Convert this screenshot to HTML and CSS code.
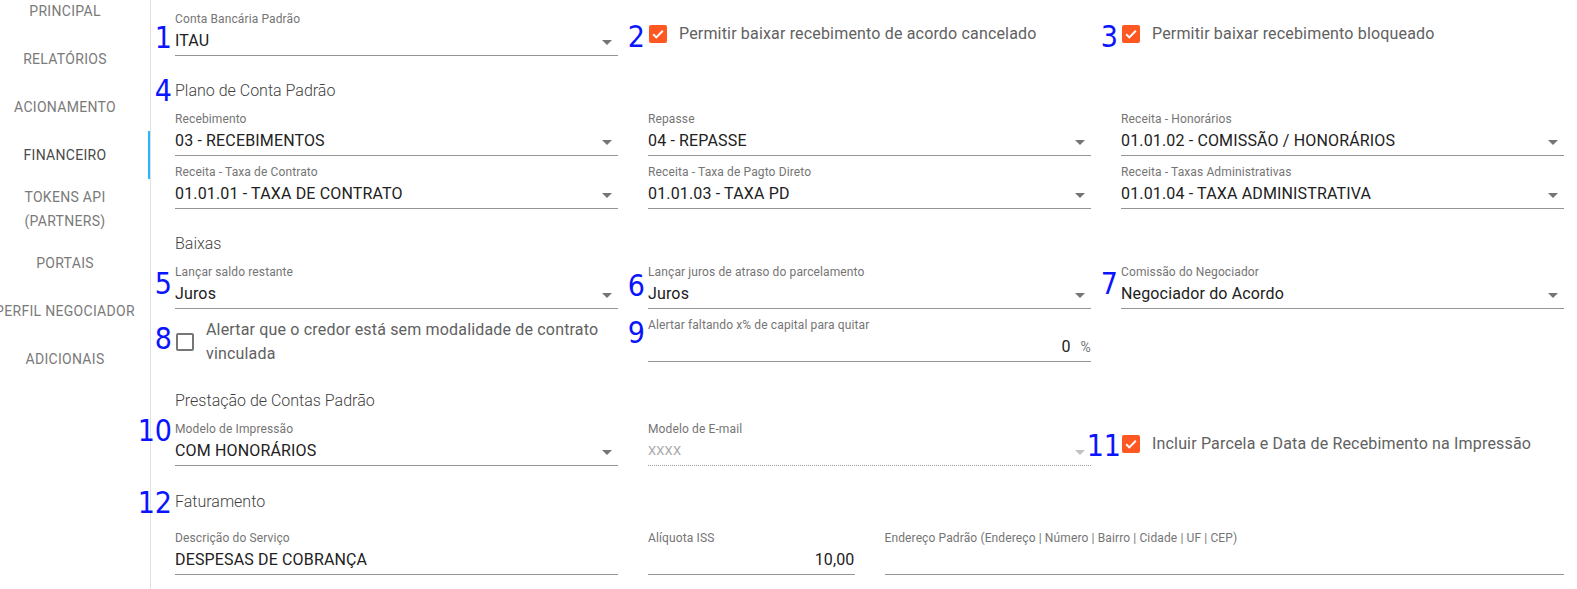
FILE: index.html
```html
<!DOCTYPE html>
<html lang="pt-BR">
<head>
<meta charset="utf-8">
<title>Financeiro</title>
<link rel="stylesheet" href="styles.css">
</head>
<body>
<div class="app">
  <nav class="sidebar">
    <ul class="menu">
      <li class="menu-item"><span>PRINCIPAL</span></li>
      <li class="menu-item"><span>RELATÓRIOS</span></li>
      <li class="menu-item"><span>ACIONAMENTO</span></li>
      <li class="menu-item active"><span>FINANCEIRO</span></li>
      <li class="menu-item"><span>TOKENS API<br>(PARTNERS)</span></li>
      <li class="menu-item"><span>PORTAIS</span></li>
      <li class="menu-item"><span>PERFIL NEGOCIADOR</span></li>
      <li class="menu-item"><span>ADICIONAIS</span></li>
    </ul>
  </nav>

  <main class="content">
    <div class="row">
      <div class="field">
        <span class="num t11">1</span>
        <label class="field-label">Conta Bancária Padrão</label>
        <div class="field-control"><span class="value">ITAU</span><span class="caret"></span></div>
      </div>
      <div class="check">
        <span class="num">2</span>
        <svg class="box-svg" width="18" height="18" viewBox="0 0 18 18"><rect width="18" height="18" rx="2" fill="#ff5722"/><path d="M4.2 9.3l3.1 3.1 6.5-6.6" fill="none" stroke="#fff" stroke-width="2"/></svg>
        <span class="check-text">Permitir baixar recebimento de acordo cancelado</span>
      </div>
      <div class="check">
        <span class="num">3</span>
        <svg class="box-svg" width="18" height="18" viewBox="0 0 18 18"><rect width="18" height="18" rx="2" fill="#ff5722"/><path d="M4.2 9.3l3.1 3.1 6.5-6.6" fill="none" stroke="#fff" stroke-width="2"/></svg>
        <span class="check-text">Permitir baixar recebimento bloqueado</span>
      </div>
    </div>

    <h3 class="section"><span class="num tm3">4</span>Plano de Conta Padrão</h3>

    <div class="row">
      <div class="field">
        <label class="field-label">Recebimento</label>
        <div class="field-control"><span class="value">03 - RECEBIMENTOS</span><span class="caret"></span></div>
      </div>
      <div class="field">
        <label class="field-label">Repasse</label>
        <div class="field-control"><span class="value">04 - REPASSE</span><span class="caret"></span></div>
      </div>
      <div class="field">
        <label class="field-label">Receita - Honorários</label>
        <div class="field-control"><span class="value">01.01.02 - COMISSÃO / HONORÁRIOS</span><span class="caret"></span></div>
      </div>
    </div>
    <div class="row">
      <div class="field">
        <label class="field-label">Receita - Taxa de Contrato</label>
        <div class="field-control"><span class="value">01.01.01 - TAXA DE CONTRATO</span><span class="caret"></span></div>
      </div>
      <div class="field">
        <label class="field-label">Receita - Taxa de Pagto Direto</label>
        <div class="field-control"><span class="value">01.01.03 - TAXA PD</span><span class="caret"></span></div>
      </div>
      <div class="field">
        <label class="field-label">Receita - Taxas Administrativas</label>
        <div class="field-control"><span class="value">01.01.04 - TAXA ADMINISTRATIVA</span><span class="caret"></span></div>
      </div>
    </div>

    <h3 class="section">Baixas</h3>

    <div class="row">
      <div class="field">
        <span class="num t4">5</span>
        <label class="field-label">Lançar saldo restante</label>
        <div class="field-control"><span class="value">Juros</span><span class="caret"></span></div>
      </div>
      <div class="field">
        <span class="num t6">6</span>
        <label class="field-label">Lançar juros de atraso do parcelamento</label>
        <div class="field-control"><span class="value">Juros</span><span class="caret"></span></div>
      </div>
      <div class="field">
        <span class="num t4">7</span>
        <label class="field-label">Comissão do Negociador</label>
        <div class="field-control"><span class="value">Negociador do Acordo</span><span class="caret"></span></div>
      </div>
    </div>
    <div class="row">
      <div class="check">
        <span class="num t6">8</span>
        <span class="box"></span>
        <span class="check-text">Alertar que o credor está sem modalidade de contrato vinculada</span>
      </div>
      <div class="field">
        <span class="num">9</span>
        <label class="field-label">Alertar faltando x% de capital para quitar</label>
        <div class="field-control"><span class="value right">0</span><span class="suffix">%</span></div>
      </div>
    </div>

    <h3 class="section">Prestação de Contas Padrão</h3>

    <div class="row">
      <div class="field">
        <span class="num tm6">10</span>
        <label class="field-label">Modelo de Impressão</label>
        <div class="field-control"><span class="value">COM HONORÁRIOS</span><span class="caret"></span></div>
      </div>
      <div class="field">
        <label class="field-label">Modelo de E-mail</label>
        <div class="field-control disabled"><span class="value placeholder">XXXX</span><span class="caret light"></span></div>
      </div>
      <div class="check">
        <span class="num tm1 tight">11</span>
        <svg class="box-svg" width="18" height="18" viewBox="0 0 18 18"><rect width="18" height="18" rx="2" fill="#ff5722"/><path d="M4.2 9.3l3.1 3.1 6.5-6.6" fill="none" stroke="#fff" stroke-width="2"/></svg>
        <span class="check-text">Incluir Parcela e Data de Recebimento na Impressão</span>
      </div>
    </div>

    <h3 class="section section-lg"><span class="num tm2">12</span>Faturamento</h3>

    <div class="row row-12">
      <div class="field span-4">
        <label class="field-label">Descrição do Serviço</label>
        <div class="field-control"><span class="value">DESPESAS DE COBRANÇA</span></div>
      </div>
      <div class="field span-2">
        <label class="field-label">Alíquota ISS</label>
        <div class="field-control"><span class="value right">10,00</span></div>
      </div>
      <div class="field span-6">
        <label class="field-label">Endereço Padrão (Endereço | Número | Bairro | Cidade | UF | CEP)</label>
        <div class="field-control"><span class="value"></span></div>
      </div>
    </div>
  </main>
</div>
</body>
</html>
```

FILE: styles.css
```css
* { box-sizing: border-box; }

html, body {
  margin: 0;
  padding: 0;
  background: #fff;
}

body {
  font-family: Roboto, "Liberation Sans", Arial, sans-serif;
  color: #212121;
  overflow: hidden;
}

.app {
  display: flex;
  min-height: 100vh;
}

/* Sidebar */
.sidebar {
  width: 151px;
  flex: none;
  border-right: 1px solid #e0e0e0;
}

.menu {
  list-style: none;
  margin: -13px 0 0;
  padding: 0;
}

.menu-item {
  min-height: 48px;
  padding: 6px 20px 6px 0;
  display: flex;
  align-items: center;
  justify-content: center;
  text-align: center;
  font-size: 14px;
  line-height: 24px;
  letter-spacing: 0.3px;
  color: #7a7a7a;
  white-space: nowrap;
}

.menu-item.active {
  color: #4a4a4a;
  box-shadow: inset -2px 0 0 #29b6f6;
}

/* Content */
.content {
  flex: 1;
  min-width: 0;
  padding: 12px 13px 0 24px;
}

.row {
  display: grid;
  grid-template-columns: repeat(3, minmax(0, 1fr));
  column-gap: 30px;
  align-items: start;
}

.row + .row { margin-top: 9px; }

.row-12 { grid-template-columns: repeat(12, minmax(0, 1fr)); }
.span-2 { grid-column: span 2; }
.span-4 { grid-column: span 4; }
.span-6 { grid-column: span 6; }

.section {
  position: relative;
  margin: 23px 0 9px;
  font-size: 16px;
  font-weight: 300;
  line-height: 24px;
  color: #3f3f3f;
}

.section-lg {
  margin-top: 24px;
  margin-bottom: 17px;
}

/* Fields */
.field {
  position: relative;
  min-width: 0;
}

.field-label {
  display: block;
  font-size: 12px;
  line-height: 14px;
  letter-spacing: 0.12px;
  color: #757575;
  white-space: nowrap;
}

.field-control {
  margin-top: 3px;
  height: 27px;
  padding-bottom: 2px;
  border-bottom: 1px solid #949494;
  display: flex;
  align-items: center;
  font-size: 16px;
  line-height: 24px;
  letter-spacing: 0.15px;
  color: #212121;
}

.field-control.disabled {
  border-bottom: 1px dotted #9e9e9e;
}

.value {
  flex: 1;
  min-width: 0;
  overflow: hidden;
  white-space: nowrap;
}

.value.right { text-align: right; }

.value.placeholder {
  font-size: 13px;
  color: #a8a8a8;
}

.suffix {
  margin-left: 10px;
  font-size: 14px;
  color: #757575;
}

.caret {
  flex: none;
  width: 0;
  height: 0;
  margin: 3px 6px 0 10px;
  border-left: 5px solid transparent;
  border-right: 5px solid transparent;
  border-top: 5px solid #757575;
}

.caret.light { border-top-color: #c2c2c2; }

/* Checkboxes */
.check {
  position: relative;
  display: flex;
  align-items: center;
  align-self: center;
  padding-left: 1px;
}

.box-svg {
  flex: none;
  display: block;
  margin-right: 12px;
}

.box {
  flex: none;
  width: 18px;
  height: 18px;
  margin-right: 12px;
  border: 2px solid #767676;
  border-radius: 2px;
}

.check-text {
  font-size: 16px;
  line-height: 24px;
  letter-spacing: 0.17px;
  color: #616161;
}

/* Annotation numbers drawn over the form */
.num {
  position: absolute;
  right: calc(100% + 3px);
  top: 0;
  font-family: "DejaVu Sans", "Liberation Sans", sans-serif;
  font-stretch: condensed;
  font-size: 30px;
  line-height: 30px;
  font-weight: 400;
  letter-spacing: 0;
  color: #0a14ff;
  white-space: nowrap;
}

.num.tight { right: 100%; }

.num.t11 { top: 11px; }
.num.t6 { top: 6px; }
.num.t4 { top: 4px; }
.num.tm1 { top: -1px; }
.num.tm2 { top: -2px; }
.num.tm3 { top: -3px; }
.num.tm6 { top: -6px; }
```
